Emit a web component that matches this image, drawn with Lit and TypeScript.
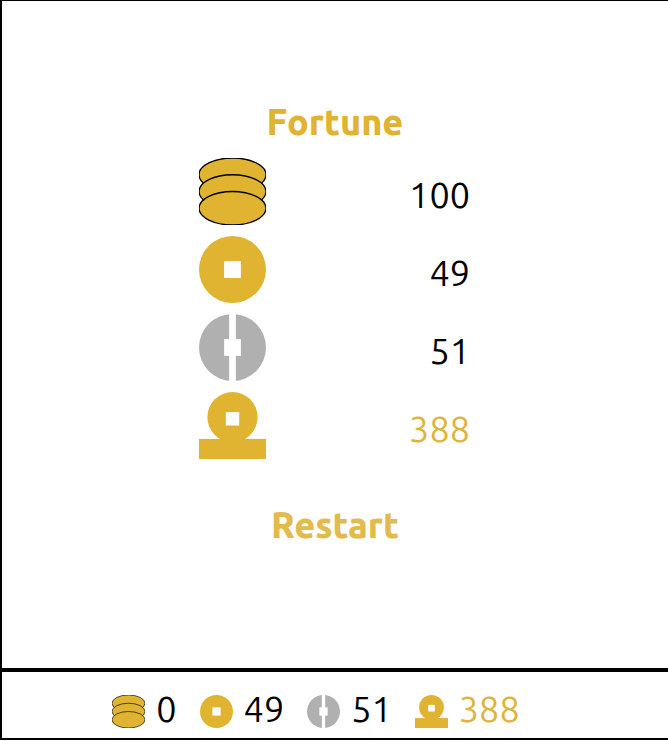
import { LitElement, html, css, svg } from "lit";
import { customElement, property, state } from "lit/decorators.js";

type IconName = "stack" | "coin" | "split" | "total";

interface Score {
  icon: IconName;
  label: string;
  final: number;
  current: number;
}

const shapes = {
  stack: svg`
    <g class="gold outline">
      <ellipse cx="50" cy="25" rx="50" ry="25"></ellipse>
      <ellipse cx="50" cy="50" rx="50" ry="25"></ellipse>
      <ellipse cx="50" cy="75" rx="50" ry="25"></ellipse>
    </g>`,
  coin: svg`
    <circle class="gold" cx="50" cy="50" r="50"></circle>
    <rect class="hole" x="37.5" y="37.5" width="25" height="25"></rect>`,
  split: svg`
    <circle class="silver" cx="50" cy="50" r="50"></circle>
    <rect class="hole" x="45" y="0" width="10" height="100"></rect>
    <rect class="hole" x="37.5" y="37.5" width="25" height="25"></rect>`,
  total: svg`
    <circle class="gold" cx="50" cy="37.5" r="37.5"></circle>
    <rect class="gold" x="0" y="70" width="100" height="30"></rect>
    <rect class="hole" x="40" y="30" width="20" height="20"></rect>`,
};

@customElement("coin-icon")
export class CoinIcon extends LitElement {
  @property() name: IconName = "coin";
  @property() label = "";

  static styles = css`
    :host {
      display: block;
      flex: none;
    }
    .icon {
      display: block;
      width: 100%;
      height: 100%;
    }
    .gold {
      fill: #e0b430;
    }
    .silver {
      fill: #b0b0b0;
    }
    .hole {
      fill: #fff;
    }
    .outline {
      stroke: #000;
      stroke-width: 2;
    }
  `;

  render() {
    return html`<svg class="icon" viewBox="0 0 100 100" role="img" aria-label=${this.label}>
      ${shapes[this.name]}
    </svg>`;
  }
}

@customElement("app-root")
export class AppRoot extends LitElement {
  @state() private scores: Score[] = [
    { icon: "stack", label: "Coins", final: 100, current: 0 },
    { icon: "coin", label: "Whole", final: 49, current: 49 },
    { icon: "split", label: "Split", final: 51, current: 51 },
    { icon: "total", label: "Fortune", final: 388, current: 388 },
  ];

  static styles = css`
    :host {
      box-sizing: border-box;
      min-height: 100vh;
      padding-bottom: 1px;
      display: flex;
      flex-direction: column;
      background: #fff;
      color: #000;
      font: 36px/48px Ubuntu, "Noto Sans", sans-serif;
    }
    .frame {
      flex: 1;
      display: flex;
      flex-direction: column;
      border: solid #000;
      border-width: 1px 0 2px 2px;
    }
    .board {
      flex: 1;
      display: flex;
      flex-direction: column;
      align-items: center;
      justify-content: center;
      padding-bottom: 22px;
    }
    .title,
    .restart {
      margin: 0;
      padding: 0;
      border: 0;
      background: none;
      font: inherit;
      font-weight: 800;
      color: #e0b430;
    }
    .restart {
      color: #e2bb4c;
      cursor: pointer;
    }
    .results {
      box-sizing: border-box;
      width: 272px;
      max-width: 100%;
      margin: 12px 0 42px;
      padding: 0 1px 0 0;
      list-style: none;
      display: grid;
      gap: 11px;
    }
    .result {
      display: flex;
      align-items: center;
      justify-content: space-between;
    }
    .result coin-icon {
      width: 67px;
      height: 67px;
    }
    .value {
      padding-top: 6px;
    }
    .total {
      color: #e0b43c;
    }
    .status {
      display: flex;
      flex-wrap: wrap;
      justify-content: center;
      gap: 0 23px;
      margin: 0;
      padding: 13px 38px 5px 0;
      border-top: 4px solid #000;
      list-style: none;
    }
    .tally {
      display: flex;
      align-items: flex-start;
      gap: 11px;
    }
    .tally coin-icon {
      width: 33px;
      height: 33px;
      margin-top: 10px;
    }
  `;

  private restart() {
    this.scores = this.scores.map((s) => ({ ...s }));
  }

  render() {
    return html`
      <div class="frame">
        <main class="board">
          <h1 class="title">Fortune</h1>
          <ul class="results">
            ${this.scores.map(
              (s) => html`<li class="result">
                <coin-icon name=${s.icon} label=${s.label}></coin-icon>
                <span class="value ${s.icon}">${s.final}</span>
              </li>`
            )}
          </ul>
          <button class="restart" type="button" @click=${this.restart}>Restart</button>
        </main>
        <ul class="status">
          ${this.scores.map(
            (s) => html`<li class="tally">
              <coin-icon name=${s.icon} label=${s.label}></coin-icon>
              <span class=${s.icon}>${s.current}</span>
            </li>`
          )}
        </ul>
      </div>
    `;
  }
}
